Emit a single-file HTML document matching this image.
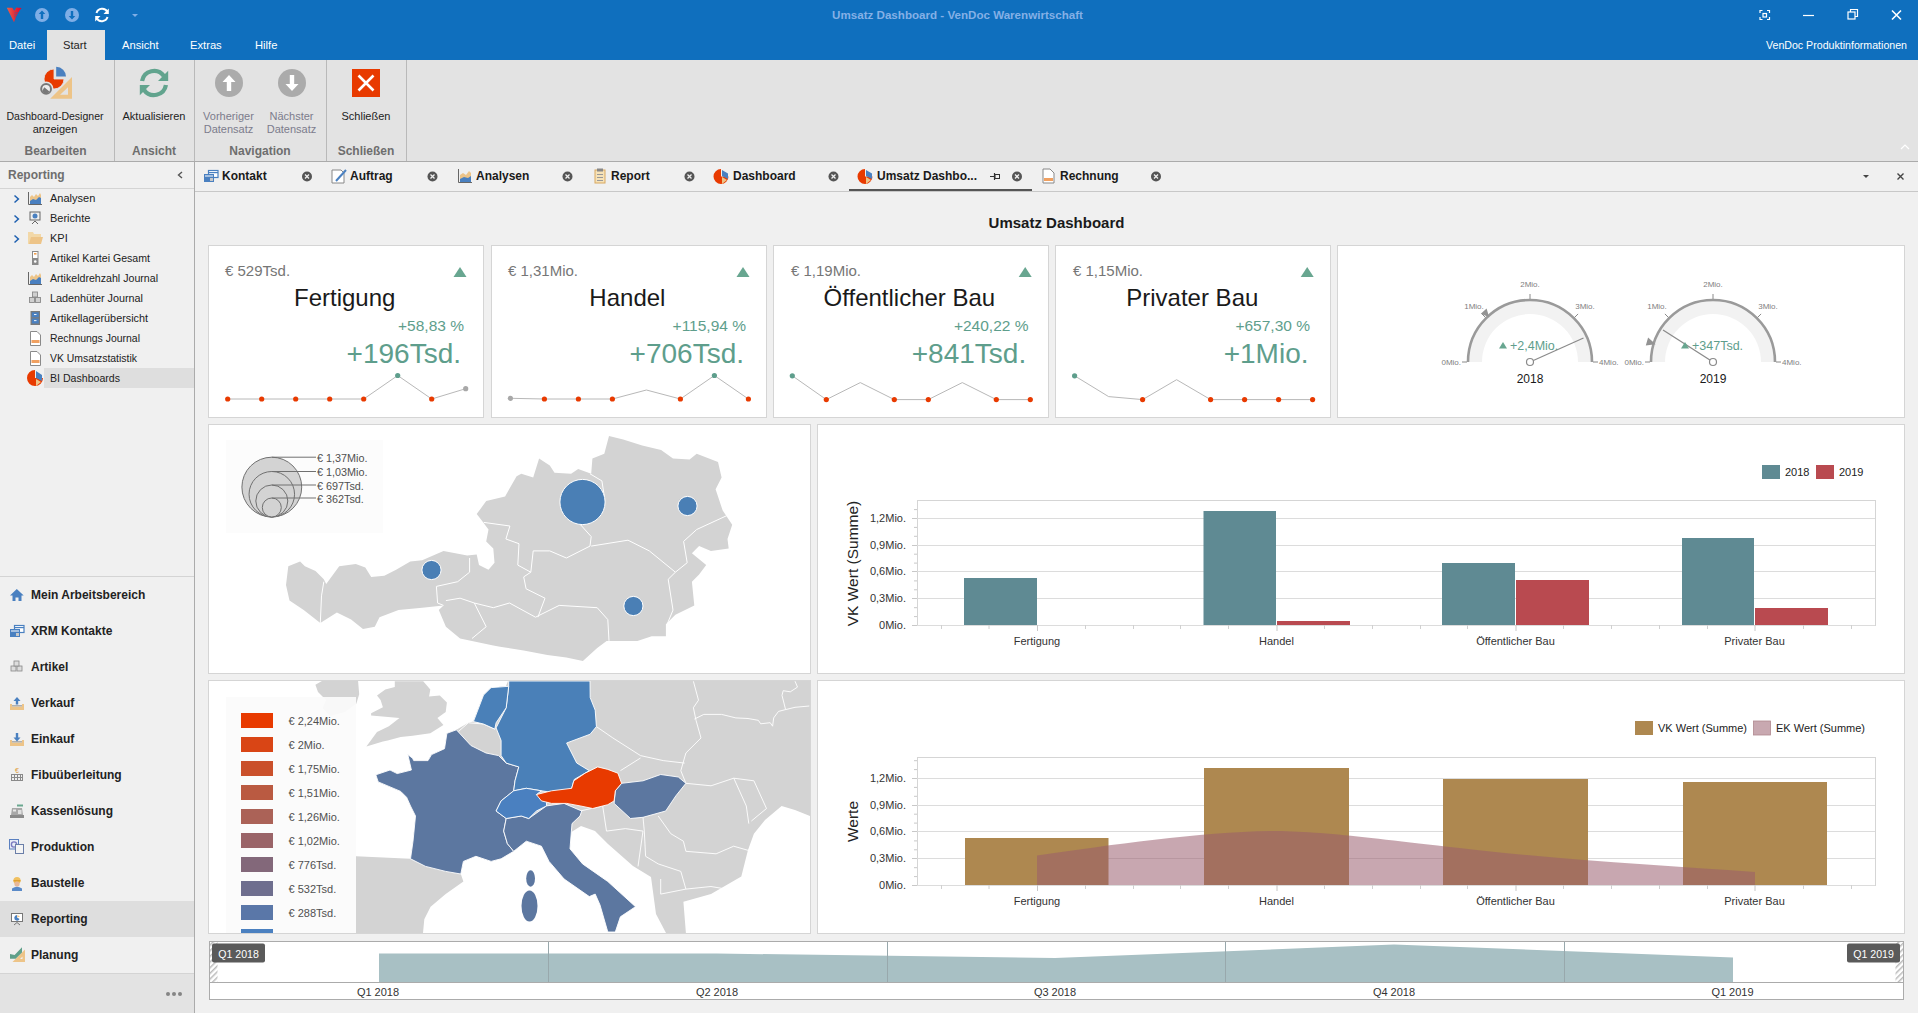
<!DOCTYPE html>
<html><head><meta charset="utf-8">
<style>
html,body{margin:0;padding:0;width:1918px;height:1013px;overflow:hidden;background:#F0F0F0}
svg{display:block}
text{font-family:"Liberation Sans",sans-serif}
</style></head><body>
<svg width="1918" height="1013" viewBox="0 0 1918 1013">
<!-- ============ TITLE + MENU ============ -->
<rect x="0" y="0" width="1918" height="60" fill="#0F6FBE"/>
<!-- V logo -->
<defs><linearGradient id="vg" x1="0" y1="0" x2="1" y2="0"><stop offset="0" stop-color="#F06048"/><stop offset="0.6" stop-color="#E02838"/><stop offset="1" stop-color="#E8002A"/></linearGradient></defs><path d="M6.8 7.7 L12.3 7.7 L14.2 10.8 L16.4 7.5 L21.6 7.9 L19.5 10.5 L16 17 L14 22.3 Z" fill="url(#vg)"/><g stroke="#0F6FBE" stroke-width="0.6" opacity="0.7"><path d="M14.5 12.8 H19 M14 14.8 H18 M14 16.8 H17"/></g>
<!-- quick access -->
<circle cx="42" cy="15" r="7" fill="#7FAEE6"/>
<path d="M42 10.5 L45.3 14 L43.2 14 L43.2 19 L40.8 19 L40.8 14 L38.7 14 Z" fill="#0F6FBE"/>
<circle cx="72" cy="15" r="7" fill="#7FAEE6"/>
<path d="M72 19.5 L75.3 16 L73.2 16 L73.2 11 L70.8 11 L70.8 16 L68.7 16 Z" fill="#0F6FBE"/>
<g fill="none" stroke="#FFFFFF" stroke-width="2">
<path d="M96.5 13 A6 6 0 0 1 107.5 12"/><path d="M107.5 17 A6 6 0 0 1 96.5 18"/>
</g>
<path d="M108.8 8.5 L108.8 14 L103.5 14 Z" fill="#fff"/><path d="M95.2 21.5 L95.2 16 L100.5 16 Z" fill="#fff"/>
<path d="M132 14 L138 14 L135 17 Z" fill="#7FAEE6"/>
<text x="957.5" y="19" font-size="11.6" font-weight="700" fill="#84B0E6" text-anchor="middle">Umsatz Dashboard - VenDoc Warenwirtschaft</text>
<!-- window buttons -->
<g fill="none" stroke="#fff" stroke-width="1.2">
<path d="M1760 13 V10.5 H1762.5 M1767 10.5 H1769.5 V13 M1769.5 17 V19.5 H1767 M1762.5 19.5 H1760 V17"/>
<rect x="1763" y="13.5" width="3.5" height="3.5"/>
<path d="M1803 15.5 H1814"/>
<rect x="1848" y="12" width="7" height="7"/><path d="M1850.5 12 V9.5 H1857.5 V16.5 H1855"/>
</g>
<path d="M1892 10.5 L1901 19.5 M1901 10.5 L1892 19.5" stroke="#fff" stroke-width="1.6"/>
<!-- menu -->
<rect x="47" y="30" width="58" height="31" fill="#E3E3E3"/>
<g font-size="11.2" fill="#FFFFFF">
<text x="9" y="49">Datei</text>
<text x="122" y="49">Ansicht</text>
<text x="190" y="49">Extras</text>
<text x="255" y="49">Hilfe</text>
<text x="1907" y="49" text-anchor="end" font-size="11" textLength="141" lengthAdjust="spacingAndGlyphs">VenDoc Produktinformationen</text>
</g>
<text x="63" y="49" font-size="11.2" fill="#222">Start</text>

<!-- ============ RIBBON ============ -->
<rect x="0" y="60" width="1918" height="101" fill="#E3E3E3"/>
<rect x="0" y="161" width="1918" height="1" fill="#ABABAB"/>
<g fill="#B9B9B9">
<rect x="114" y="60" width="1" height="101"/>
<rect x="194" y="60" width="1" height="101"/>
<rect x="326" y="60" width="1" height="101"/>
<rect x="406" y="60" width="1" height="101"/>
</g>
<!-- dashboard designer icon -->
<g>
<path d="M54 69 A10 10 0 1 0 64 79 L54 79 Z" fill="#E83A00" stroke="#E3E3E3" stroke-width="0.8"/>
<path d="M56.2 66.8 A9.8 9.8 0 0 1 66 76.6 L56.2 76.6 Z" fill="#4A80C0"/>
<path d="M72 77 L72 98.8 L50.2 98.8 Z" fill="#EDC488"/>
<path d="M68 87.3 L68 94.8 L60.1 94.8 Z" fill="#E3E3E3"/>
<circle cx="46.1" cy="88.9" r="7.4" fill="#E3E3E3"/>
<circle cx="46.1" cy="88.9" r="4.9" fill="#EDEDED" stroke="#787878" stroke-width="2"/>
<path d="M44.3 87.2 L48.5 90.8 L49.5 91.6 A4.2 4.2 0 0 1 42.2 91 Z" fill="#787878"/>
</g>
<!-- refresh icon green -->
<g fill="none" stroke="#62A48E" stroke-width="4.3">
<path d="M142.07 81 A12.1 12.1 0 0 1 163.9 76.1"/>
<path d="M165.93 85 A12.1 12.1 0 0 1 144.1 89.9"/>
</g>
<path d="M168.2 70.8 L168.2 81 L158 81 Z" fill="#62A48E"/><path d="M139.8 95.2 L139.8 85 L150 85 Z" fill="#62A48E"/>
<!-- nav icons -->
<circle cx="229" cy="83" r="14" fill="#ABABAB"/>
<path d="M229 75 L235.5 82 L231.2 82 L231.2 91 L226.8 91 L226.8 82 L222.5 82 Z" fill="#fff"/>
<circle cx="292" cy="83" r="14" fill="#ABABAB"/>
<path d="M292 91 L298.5 84 L294.2 84 L294.2 75 L289.8 75 L289.8 84 L285.5 84 Z" fill="#fff"/>
<rect x="352" y="69" width="28" height="28" fill="#E83A00"/>
<path d="M358.5 75.5 L373.5 90.5 M373.5 75.5 L358.5 90.5" stroke="#fff" stroke-width="2.6"/>
<g font-size="11" fill="#222" text-anchor="middle">
<text x="55" y="120" textLength="97" lengthAdjust="spacingAndGlyphs">Dashboard-Designer</text>
<text x="55" y="133">anzeigen</text>
<text x="154" y="120">Aktualisieren</text>
<text x="366" y="120">Schließen</text>
</g>
<g font-size="11" fill="#7C7C8C" text-anchor="middle">
<text x="228.5" y="120">Vorheriger</text>
<text x="228.5" y="133">Datensatz</text>
<text x="291.5" y="120">Nächster</text>
<text x="291.5" y="133">Datensatz</text>
</g>
<g font-size="12" font-weight="700" fill="#6E6E6E" text-anchor="middle">
<text x="55.5" y="155">Bearbeiten</text>
<text x="154" y="155">Ansicht</text>
<text x="260" y="155">Navigation</text>
<text x="366" y="155">Schließen</text>
</g>
<path d="M1901 149 L1905 145 L1909 149" fill="none" stroke="#fff" stroke-width="1.2"/>

<!-- ============ SIDEBAR ============ -->
<rect x="0" y="162" width="194" height="851" fill="#F0F0F0"/>
<rect x="194" y="161" width="1" height="852" fill="#ABABAB"/>
<text x="8" y="179" font-size="12" font-weight="700" fill="#6E6E6E">Reporting</text>
<path d="M182 172 L178.5 175 L182 178" fill="none" stroke="#555" stroke-width="1.4"/>
<rect x="0" y="188" width="194" height="1" fill="#D4D4D4"/>

<!-- tree -->
<g fill="#1F60B0">
<path d="M15 195 L19.5 199 L15 203 L14 202 L17.3 199 L14 196 Z"/>
<path d="M15 215 L19.5 219 L15 223 L14 222 L17.3 219 L14 216 Z"/>
<path d="M15 235 L19.5 239 L15 243 L14 242 L17.3 239 L14 236 Z"/>
</g>
<!-- icons -->
<g>
 <path d="M28.5 192 V204.5 H42" fill="none" stroke="#666" stroke-width="1"/>
 <path d="M30 204 V197 L32 195 L34 197 L36 194 L38 196 L40 193 L41 195 V204 Z" fill="#EDC488"/>
 <path d="M30 204 V201 L33 199 L36 200 L39 197 L41 198 V204 Z" fill="#4A80C0"/>
 <rect x="30" y="212" width="10" height="8" fill="none" stroke="#666"/>
 <circle cx="35" cy="216" r="2.5" fill="#4A80C0"/><path d="M32 224 L35 221 L38 224" fill="none" stroke="#666"/>
 <path d="M28 232 H33 L34 234 H41 V244 H28 Z" fill="#F2D8A8"/><path d="M29 244 L31 237 H43 L41 244 Z" fill="#EDC488"/>
 <rect x="32" y="251" width="6.5" height="14" fill="#8A8A8A"/><rect x="33" y="252" width="4.5" height="6" fill="#fff"/><rect x="34" y="253" width="2.5" height="1.6" fill="#F0A050"/><circle cx="35.25" cy="261.5" r="1.3" fill="#fff"/>
 <path d="M28.5 272 V284.5 H42" fill="none" stroke="#666" stroke-width="1"/>
 <path d="M30 284 V277 L32 275 L34 277 L36 274 L38 276 L40 273 L41 275 V284 Z" fill="#EDC488"/>
 <path d="M30 284 V281 L33 279 L36 280 L39 277 L41 278 V284 Z" fill="#4A80C0"/>
 <g fill="#D0D0D0" stroke="#8A8A8A" stroke-width="0.9"><rect x="29.5" y="297.5" width="5" height="5"/><rect x="35.5" y="297.5" width="5" height="5"/><rect x="32.5" y="292" width="5" height="5"/></g>
 <rect x="30.5" y="311" width="9.5" height="14" fill="#7A7A7A"/><rect x="31.8" y="312.3" width="7" height="5" fill="#4A80C0"/><rect x="31.8" y="318.5" width="7" height="5" fill="#4A80C0"/><rect x="34" y="314" width="2.5" height="0.9" fill="#fff"/><rect x="34" y="320.2" width="2.5" height="0.9" fill="#fff"/>
 <path d="M30.5 331.5 H37 L40.5 335 V345.5 H30.5 Z" fill="#fff" stroke="#8A8A8A" stroke-linejoin="miter"/><rect x="31.5" y="340" width="8" height="3" fill="#F0A060"/>
 <path d="M30.5 351.5 H37 L40.5 355 V365.5 H30.5 Z" fill="#fff" stroke="#8A8A8A" stroke-linejoin="miter"/><rect x="31.5" y="360" width="8" height="3" fill="#F0A060"/>
 <path d="M35 370 A8 8 0 1 0 43 378 L35 378 Z" fill="#E83A00"/><path d="M36 371 L42 375 L42 381 L36 378 Z" fill="#4A80C0"/><path d="M36 379 L41 382 L36 386 Z" fill="#EDC488"/>
</g>
<rect x="44" y="368" width="150" height="20" fill="#DEDEDE"/>
<g font-size="11" fill="#222">
<text x="50" y="202">Analysen</text>
<text x="50" y="222">Berichte</text>
<text x="50" y="242">KPI</text>
<text x="50" y="262" textLength="100" lengthAdjust="spacingAndGlyphs">Artikel Kartei Gesamt</text>
<text x="50" y="282" textLength="108" lengthAdjust="spacingAndGlyphs">Artikeldrehzahl Journal</text>
<text x="50" y="302" textLength="93" lengthAdjust="spacingAndGlyphs">Ladenhüter Journal</text>
<text x="50" y="322" textLength="98" lengthAdjust="spacingAndGlyphs">Artikellagerübersicht</text>
<text x="50" y="342" textLength="90" lengthAdjust="spacingAndGlyphs">Rechnungs Journal</text>
<text x="50" y="362" textLength="87" lengthAdjust="spacingAndGlyphs">VK Umsatzstatistik</text>
<text x="50" y="382" textLength="70" lengthAdjust="spacingAndGlyphs">BI Dashboards</text>
</g>
<!-- bottom nav -->
<rect x="0" y="576" width="194" height="1" fill="#D4D4D4"/>
<rect x="0" y="901" width="194" height="36" fill="#DEDEDE"/>
<rect x="0" y="973" width="194" height="1" fill="#D4D4D4"/>
<rect x="0" y="974" width="194" height="39" fill="#E3E3E3"/>
<g fill="#858585"><circle cx="168" cy="994" r="2"/><circle cx="174" cy="994" r="2"/><circle cx="180" cy="994" r="2"/></g>
<g font-size="12" font-weight="700" fill="#222">
<text x="31" y="599">Mein Arbeitsbereich</text>
<text x="31" y="635">XRM Kontakte</text>
<text x="31" y="671">Artikel</text>
<text x="31" y="707">Verkauf</text>
<text x="31" y="743">Einkauf</text>
<text x="31" y="779">Fibuüberleitung</text>
<text x="31" y="815">Kassenlösung</text>
<text x="31" y="851">Produktion</text>
<text x="31" y="887">Baustelle</text>
<text x="31" y="923">Reporting</text>
<text x="31" y="959">Planung</text>
</g>
<g>
 <path d="M16.8 589 L23.7 595.5 H21.5 V601 H18.5 V597.5 H15.5 V601 H12.5 V595.5 H10 Z" fill="#4A80C0"/>
 <rect x="14.5" y="625.5" width="9.5" height="7" fill="#fff" stroke="#4A80C0" stroke-width="1.2"/><rect x="14.5" y="627" width="9.5" height="1.2" fill="#4A80C0"/><rect x="10" y="629" width="10" height="8" fill="#4A80C0"/><rect x="11" y="630.5" width="8" height="1" fill="#fff"/><rect x="16" y="633" width="3" height="3" fill="#C8C8C8"/>
 <g fill="#DDD" stroke="#888" stroke-width="0.8"><rect x="11" y="666" width="5" height="5"/><rect x="17" y="666" width="5" height="5"/><rect x="14" y="661" width="5" height="5"/></g>
 <path d="M10 704 V710 H24 V704 H22 V706.5 H12 V704 Z" fill="#EDC488"/><rect x="12" y="705" width="10" height="1.5" fill="#B0B0B0"/><path d="M17 697 L20.5 701 H18.2 V704.5 H15.8 V701 H13.5 Z" fill="#4A80C0"/>
 <path d="M10 740 V746 H24 V740 H22 V742.5 H12 V740 Z" fill="#EDC488"/><rect x="12" y="741" width="10" height="1.5" fill="#B0B0B0"/><path d="M17 741.5 L20.5 737.5 H18.2 V733 H15.8 V737.5 H13.5 Z" fill="#4A80C0"/>
 <g fill="none" stroke="#8A8A8A" stroke-width="1"><rect x="11.5" y="774.5" width="11" height="6"/><path d="M14.5 774.5 V780.5 M17.5 774.5 V780.5 M20.5 774.5 V780.5 M11.5 777.5 H22.5"/></g><text x="17" y="773" font-size="7" fill="#E0A040" text-anchor="middle">€</text>
 <rect x="10" y="815" width="14" height="3" fill="#8A8A8A"/><path d="M11 815 L12 808 H22 L23 815 Z" fill="#A8A8A8"/><rect x="13" y="809.5" width="3" height="2" fill="#E8E8E8"/><rect x="18" y="810" width="3.5" height="4" fill="#E0E0E0"/><rect x="17" y="804.5" width="6" height="2" fill="#6AA890"/>
 <rect x="9.5" y="839.5" width="9" height="9.5" fill="#E8ECF6" stroke="#5A80C0"/><circle cx="14" cy="844.5" r="2.6" fill="none" stroke="#7A7AC0" stroke-width="1.4"/><rect x="15.5" y="844.5" width="8" height="9" fill="#F4F4F4" stroke="#6A7EA8"/>
 <circle cx="17" cy="880.5" r="3.6" fill="#F0C060"/><rect x="13.5" y="880" width="7" height="1.5" fill="#E0A030"/><circle cx="17" cy="884" r="2.6" fill="#E8B898"/><path d="M12 891 V888.5 Q17 885 22 888.5 V891 Z" fill="#5A8AC8"/>
 <rect x="11.5" y="913.5" width="11" height="8" fill="#fff" stroke="#777"/><path d="M17 915 A2.8 2.8 0 1 0 19.6 919 L17 917.5 Z" fill="#4A80C0"/><path d="M17.3 915 L20 916.5 L17.3 917.6 Z" fill="#EDC488"/><path d="M14 925 L17 922.5 L20 925" fill="none" stroke="#777"/>
 <path d="M12.5 962 L25 962 L25 949.5 Z" fill="#EDC488"/><path d="M20 959 L22.5 959 L22.5 956.5 Z" fill="#F0F0F0"/><path d="M10 954 L14.6 955 L22 947.2 L22 952.4 L15.6 958.8 L10 958.8 Z" fill="#5FA08A"/>
</g>
<!-- ============ TAB BAR ============ -->
<rect x="195" y="162" width="1723" height="29" fill="#F0F0F0"/>
<rect x="195" y="191" width="1723" height="1" fill="#C8C8C8"/>
<rect x="849" y="189" width="183" height="2" fill="#555"/>
<g font-size="12" font-weight="700" fill="#1A1A1A">
<text x="222" y="180">Kontakt</text>
<text x="350" y="180">Auftrag</text>
<text x="476" y="180">Analysen</text>
<text x="611" y="180">Report</text>
<text x="733" y="180">Dashboard</text>
<text x="877" y="180">Umsatz Dashbo...</text>
<text x="1060" y="180">Rechnung</text>
</g>
<g fill="#555">
<circle cx="307" cy="176.5" r="5"/><circle cx="432.5" cy="176.5" r="5"/><circle cx="567.5" cy="176.5" r="5"/>
<circle cx="689.5" cy="176.5" r="5"/><circle cx="833.5" cy="176.5" r="5"/><circle cx="1017" cy="176.5" r="5"/><circle cx="1156" cy="176.5" r="5"/>
</g>
<g stroke="#F0F0F0" stroke-width="1.3">
<path d="M305 174.5 L309 178.5 M309 174.5 L305 178.5"/><path d="M430.5 174.5 L434.5 178.5 M434.5 174.5 L430.5 178.5"/>
<path d="M565.5 174.5 L569.5 178.5 M569.5 174.5 L565.5 178.5"/><path d="M687.5 174.5 L691.5 178.5 M691.5 174.5 L687.5 178.5"/>
<path d="M831.5 174.5 L835.5 178.5 M835.5 174.5 L831.5 178.5"/><path d="M1015 174.5 L1019 178.5 M1019 174.5 L1015 178.5"/>
<path d="M1154 174.5 L1158 178.5 M1158 174.5 L1154 178.5"/>
</g>
<path d="M990 176.5 H994 M994.5 173 V180" stroke="#333" stroke-width="1.2" fill="none"/><rect x="995" y="174.5" width="4.5" height="4" fill="none" stroke="#333" stroke-width="1"/>
<path d="M1863 175 H1869 L1866 178 Z" fill="#444"/>
<path d="M1897.5 173.5 L1903.5 179.5 M1903.5 173.5 L1897.5 179.5" stroke="#444" stroke-width="1.4"/>
<g>
 <rect x="208.5" y="170.5" width="9.5" height="7" fill="#fff" stroke="#4A80C0" stroke-width="1.2"/><rect x="208.5" y="172" width="9.5" height="1.2" fill="#4A80C0"/><rect x="204" y="174" width="10" height="8" fill="#4A80C0"/><rect x="205" y="175.5" width="8" height="1" fill="#fff"/><rect x="210" y="178" width="3" height="3" fill="#C8C8C8"/>
 <path d="M332 170 H341 L344 173 V183 H332 Z" fill="#fff" stroke="#888"/><path d="M336 181 L346 170" stroke="#4A80C0" stroke-width="2"/>
 <path d="M458.5 169 V182.5 H472" fill="none" stroke="#666"/><path d="M460 182 V175 L463 173 L466 175 L469 171 L471 173 V182 Z" fill="#EDC488"/><path d="M460 182 V179 L464 177 L468 178 L471 176 V182 Z" fill="#4A80C0"/>
 <rect x="595" y="170" width="10" height="13" fill="#F6E2B8" stroke="#D8A860"/><rect x="597" y="168.5" width="6" height="3" fill="#888"/><g fill="#999"><rect x="597" y="174" width="6" height="1"/><rect x="597" y="177" width="6" height="1"/><rect x="597" y="180" width="6" height="1"/></g>
 <path d="M721 169 A7.5 7.5 0 1 0 728.5 176.5 L721 176.5 Z" fill="#E83A00"/><path d="M722 170 L728 173.5 L728 179 L722 176 Z" fill="#4A80C0"/><path d="M722 177 L727 180 L722 184 Z" fill="#EDC488"/>
 <path d="M865 169 A7.5 7.5 0 1 0 872.5 176.5 L865 176.5 Z" fill="#E83A00"/><path d="M866 170 L872 173.5 L872 179 L866 176 Z" fill="#4A80C0"/><path d="M866 177 L871 180 L866 184 Z" fill="#EDC488"/>
 <path d="M1043 169 H1050 L1054 173 V183 H1043 Z" fill="#fff" stroke="#888"/><rect x="1044" y="178" width="9" height="3" fill="#F0A060"/>
</g>
<!-- ============ DASHBOARD ============ -->
<text x="1056.5" y="228" font-size="15" font-weight="700" fill="#1A1A1A" text-anchor="middle">Umsatz Dashboard</text>
<!-- DASH START -->
<rect x="208.5" y="245.5" width="275" height="172" fill="#FFFFFF" stroke="#D5D5D5" stroke-width="1"/>
<rect x="491.5" y="245.5" width="275" height="172" fill="#FFFFFF" stroke="#D5D5D5" stroke-width="1"/>
<rect x="773.5" y="245.5" width="275" height="172" fill="#FFFFFF" stroke="#D5D5D5" stroke-width="1"/>
<rect x="1055.5" y="245.5" width="275" height="172" fill="#FFFFFF" stroke="#D5D5D5" stroke-width="1"/>
<rect x="1337.5" y="245.5" width="567" height="172" fill="#FFFFFF" stroke="#D5D5D5" stroke-width="1"/>
<rect x="208.5" y="424.5" width="602" height="249" fill="#FFFFFF" stroke="#D5D5D5" stroke-width="1"/>
<rect x="817.5" y="424.5" width="1087" height="249" fill="#FFFFFF" stroke="#D5D5D5" stroke-width="1"/>
<rect x="208.5" y="680.5" width="602" height="253" fill="#FFFFFF" stroke="#D5D5D5" stroke-width="1"/>
<rect x="817.5" y="680.5" width="1087" height="253" fill="#FFFFFF" stroke="#D5D5D5" stroke-width="1"/>
<text x="225" y="276" font-size="15" fill="#767676">€ 529Tsd.</text>
<path d="M453.5 277 L466.5 277 L460 267 Z" fill="#68A690"/>
<text x="344.7" y="306" font-size="24" fill="#1A1A1A" text-anchor="middle">Fertigung</text>
<text x="464" y="331" font-size="15.5" fill="#5E9E8C" text-anchor="end">+58,83 %</text>
<text x="461" y="363" font-size="28" fill="#5E9E8C" text-anchor="end">+196Tsd.</text>
<polyline points="227.7,399 261.7,399 295.7,399 329.7,399 363.7,399 397.7,375.5 431.7,399 465.7,388.7" fill="none" stroke="#B8B8B8" stroke-width="1"/>
<circle cx="227.7" cy="399" r="2.6" fill="#E83A00"/>
<circle cx="261.7" cy="399" r="2.6" fill="#E83A00"/>
<circle cx="295.7" cy="399" r="2.6" fill="#E83A00"/>
<circle cx="329.7" cy="399" r="2.6" fill="#E83A00"/>
<circle cx="363.7" cy="399" r="2.6" fill="#E83A00"/>
<circle cx="397.7" cy="375.5" r="2.6" fill="#5E9E8C"/>
<circle cx="431.7" cy="399" r="2.6" fill="#E83A00"/>
<circle cx="465.7" cy="388.7" r="2.6" fill="#A8A8A8"/>
<text x="508" y="276" font-size="15" fill="#767676">€ 1,31Mio.</text>
<path d="M736.5 277 L749.5 277 L743 267 Z" fill="#68A690"/>
<text x="627.4" y="306" font-size="24" fill="#1A1A1A" text-anchor="middle">Handel</text>
<text x="746" y="331" font-size="15.5" fill="#5E9E8C" text-anchor="end">+115,94 %</text>
<text x="744" y="363" font-size="28" fill="#5E9E8C" text-anchor="end">+706Tsd.</text>
<polyline points="510.4,398.3 544.4,399 578.4,399 612.4,399 646.4,390 680.4,399 714.4,375.5 748.4,399" fill="none" stroke="#B8B8B8" stroke-width="1"/>
<circle cx="510.4" cy="398.3" r="2.6" fill="#A8A8A8"/>
<circle cx="544.4" cy="399" r="2.6" fill="#E83A00"/>
<circle cx="578.4" cy="399" r="2.6" fill="#E83A00"/>
<circle cx="612.4" cy="399" r="2.6" fill="#E83A00"/>
<circle cx="680.4" cy="399" r="2.6" fill="#E83A00"/>
<circle cx="714.4" cy="375.5" r="2.6" fill="#5E9E8C"/>
<circle cx="748.4" cy="399" r="2.6" fill="#E83A00"/>
<text x="791" y="276" font-size="15" fill="#767676">€ 1,19Mio.</text>
<path d="M1018.7 277 L1031.7 277 L1025.2 267 Z" fill="#68A690"/>
<text x="909.4" y="306" font-size="24" fill="#1A1A1A" text-anchor="middle">Öffentlicher Bau</text>
<text x="1028.5" y="331" font-size="15.5" fill="#5E9E8C" text-anchor="end">+240,22 %</text>
<text x="1026.2" y="363" font-size="28" fill="#5E9E8C" text-anchor="end">+841Tsd.</text>
<polyline points="792.3,375.8 826.3,399.6 860.3,382.6 894.3,399.6 928.3,399.6 962.3,382.6 996.3,399.6 1030.3,399.6" fill="none" stroke="#B8B8B8" stroke-width="1"/>
<circle cx="792.3" cy="375.8" r="2.6" fill="#5E9E8C"/>
<circle cx="826.3" cy="399.6" r="2.6" fill="#E83A00"/>
<circle cx="894.3" cy="399.6" r="2.6" fill="#E83A00"/>
<circle cx="928.3" cy="399.6" r="2.6" fill="#E83A00"/>
<circle cx="996.3" cy="399.6" r="2.6" fill="#E83A00"/>
<circle cx="1030.3" cy="399.6" r="2.6" fill="#E83A00"/>
<text x="1073" y="276" font-size="15" fill="#767676">€ 1,15Mio.</text>
<path d="M1300.7 277 L1313.7 277 L1307.2 267 Z" fill="#68A690"/>
<text x="1192.3" y="306" font-size="24" fill="#1A1A1A" text-anchor="middle">Privater Bau</text>
<text x="1310" y="331" font-size="15.5" fill="#5E9E8C" text-anchor="end">+657,30 %</text>
<text x="1308.5" y="363" font-size="28" fill="#5E9E8C" text-anchor="end">+1Mio.</text>
<polyline points="1074.6,375.8 1108.6,396.6 1142.6,399.6 1176.6,379.7 1210.6,399.6 1244.6,399.6 1278.6,399.6 1312.6,399.6" fill="none" stroke="#B8B8B8" stroke-width="1"/>
<circle cx="1074.6" cy="375.8" r="2.6" fill="#5E9E8C"/>
<circle cx="1142.6" cy="399.6" r="2.6" fill="#E83A00"/>
<circle cx="1210.6" cy="399.6" r="2.6" fill="#E83A00"/>
<circle cx="1244.6" cy="399.6" r="2.6" fill="#E83A00"/>
<circle cx="1278.6" cy="399.6" r="2.6" fill="#E83A00"/>
<circle cx="1312.6" cy="399.6" r="2.6" fill="#E83A00"/>
<path d="M1468 362 A62 62 0 0 1 1592 362 L1578 362 A48 48 0 0 0 1482 362 Z" fill="#F2F2F2"/>
<path d="M1468 362 A62 62 0 0 1 1592 362" fill="none" stroke="#9A9A9A" stroke-width="2.6"/>
<line x1="1467.0" y1="362.0" x2="1462.0" y2="362.0" stroke="#8A8A8A" stroke-width="1"/>
<line x1="1485.5" y1="317.5" x2="1481.9" y2="313.9" stroke="#8A8A8A" stroke-width="1"/>
<line x1="1530.0" y1="299.0" x2="1530.0" y2="294.0" stroke="#8A8A8A" stroke-width="1"/>
<line x1="1574.5" y1="317.5" x2="1578.1" y2="313.9" stroke="#8A8A8A" stroke-width="1"/>
<line x1="1593.0" y1="362.0" x2="1598.0" y2="362.0" stroke="#8A8A8A" stroke-width="1"/>
<g font-size="8" fill="#808080">
<text x="1461" y="365" text-anchor="end">0Mio.</text>
<text x="1599" y="365">4Mio.</text>
<text x="1474" y="309" text-anchor="middle">1Mio.</text>
<text x="1530" y="287" text-anchor="middle">2Mio.</text>
<text x="1585" y="309" text-anchor="middle">3Mio.</text>
</g>
<path d="M1486.6 308.5 L1480.8 313.8 L1489.2 317.2 Z" fill="#939393"/>
<line x1="1530" y1="362" x2="1583.5" y2="338" stroke="#8A8A8A" stroke-width="1.2"/>
<circle cx="1530" cy="362" r="3.5" fill="#fff" stroke="#8A8A8A" stroke-width="1.2"/>
<path d="M1499 348.5 L1507 348.5 L1503 342 Z" fill="#68A690"/>
<text x="1510" y="349.5" font-size="12.5" fill="#5E9E8C">+2,4Mio.</text>
<text x="1530" y="383" font-size="12" fill="#1A1A1A" text-anchor="middle">2018</text>
<path d="M1651 362 A62 62 0 0 1 1775 362 L1761 362 A48 48 0 0 0 1665 362 Z" fill="#F2F2F2"/>
<path d="M1651 362 A62 62 0 0 1 1775 362" fill="none" stroke="#9A9A9A" stroke-width="2.6"/>
<line x1="1650.0" y1="362.0" x2="1645.0" y2="362.0" stroke="#8A8A8A" stroke-width="1"/>
<line x1="1668.5" y1="317.5" x2="1664.9" y2="313.9" stroke="#8A8A8A" stroke-width="1"/>
<line x1="1713.0" y1="299.0" x2="1713.0" y2="294.0" stroke="#8A8A8A" stroke-width="1"/>
<line x1="1757.5" y1="317.5" x2="1761.1" y2="313.9" stroke="#8A8A8A" stroke-width="1"/>
<line x1="1776.0" y1="362.0" x2="1781.0" y2="362.0" stroke="#8A8A8A" stroke-width="1"/>
<g font-size="8" fill="#808080">
<text x="1644" y="365" text-anchor="end">0Mio.</text>
<text x="1782" y="365">4Mio.</text>
<text x="1657" y="309" text-anchor="middle">1Mio.</text>
<text x="1713" y="287" text-anchor="middle">2Mio.</text>
<text x="1768" y="309" text-anchor="middle">3Mio.</text>
</g>
<path d="M1648.1 337.6 L1645.8 345.6 L1655.6 344.3 Z" fill="#939393"/>
<line x1="1713" y1="362" x2="1663" y2="330" stroke="#8A8A8A" stroke-width="1.2"/>
<circle cx="1713" cy="362" r="3.5" fill="#fff" stroke="#8A8A8A" stroke-width="1.2"/>
<path d="M1681 348.5 L1689 348.5 L1685 342 Z" fill="#68A690"/>
<text x="1692" y="349.5" font-size="12.5" fill="#5E9E8C">+347Tsd.</text>
<text x="1713" y="383" font-size="12" fill="#1A1A1A" text-anchor="middle">2019</text>
<rect x="917.5" y="500.5" width="958" height="125" fill="#fff" stroke="#D5D5D5"/>
<line x1="917" y1="518.5" x2="1875" y2="518.5" stroke="#DCDCDC"/>
<line x1="917" y1="545.5" x2="1875" y2="545.5" stroke="#DCDCDC"/>
<line x1="917" y1="571.5" x2="1875" y2="571.5" stroke="#DCDCDC"/>
<line x1="917" y1="598.5" x2="1875" y2="598.5" stroke="#DCDCDC"/>
<line x1="917" y1="625.5" x2="1875" y2="625.5" stroke="#DCDCDC"/>
<text x="906" y="522" font-size="11" fill="#333" text-anchor="end">1,2Mio.</text>
<line x1="912" y1="518.5" x2="917" y2="518.5" stroke="#C8C8C8"/>
<text x="906" y="549" font-size="11" fill="#333" text-anchor="end">0,9Mio.</text>
<line x1="912" y1="545.5" x2="917" y2="545.5" stroke="#C8C8C8"/>
<text x="906" y="575" font-size="11" fill="#333" text-anchor="end">0,6Mio.</text>
<line x1="912" y1="571.5" x2="917" y2="571.5" stroke="#C8C8C8"/>
<text x="906" y="602" font-size="11" fill="#333" text-anchor="end">0,3Mio.</text>
<line x1="912" y1="598.5" x2="917" y2="598.5" stroke="#C8C8C8"/>
<text x="906" y="629" font-size="11" fill="#333" text-anchor="end">0Mio.</text>
<line x1="912" y1="625.5" x2="917" y2="625.5" stroke="#C8C8C8"/>
<line x1="914" y1="616.6" x2="917" y2="616.6" stroke="#C8C8C8"/>
<line x1="914" y1="607.7" x2="917" y2="607.7" stroke="#C8C8C8"/>
<line x1="914" y1="589.8" x2="917" y2="589.8" stroke="#C8C8C8"/>
<line x1="914" y1="580.9" x2="917" y2="580.9" stroke="#C8C8C8"/>
<line x1="914" y1="563.1" x2="917" y2="563.1" stroke="#C8C8C8"/>
<line x1="914" y1="554.2" x2="917" y2="554.2" stroke="#C8C8C8"/>
<line x1="914" y1="536.3" x2="917" y2="536.3" stroke="#C8C8C8"/>
<line x1="914" y1="527.4" x2="917" y2="527.4" stroke="#C8C8C8"/>
<line x1="914" y1="509.6" x2="917" y2="509.6" stroke="#C8C8C8"/>
<line x1="1037.5" y1="625" x2="1037.5" y2="631" stroke="#C8C8C8"/>
<line x1="1277.0" y1="625" x2="1277.0" y2="631" stroke="#C8C8C8"/>
<line x1="1516.0" y1="625" x2="1516.0" y2="631" stroke="#C8C8C8"/>
<line x1="1755.0" y1="625" x2="1755.0" y2="631" stroke="#C8C8C8"/>
<line x1="941.5" y1="625" x2="941.5" y2="629" stroke="#D0D0D0"/>
<line x1="989.0" y1="625" x2="989.0" y2="629" stroke="#D0D0D0"/>
<line x1="1085.5" y1="625" x2="1085.5" y2="629" stroke="#D0D0D0"/>
<line x1="1133.5" y1="625" x2="1133.5" y2="629" stroke="#D0D0D0"/>
<line x1="1180.5" y1="625" x2="1180.5" y2="629" stroke="#D0D0D0"/>
<line x1="1228.5" y1="625" x2="1228.5" y2="629" stroke="#D0D0D0"/>
<line x1="1324.5" y1="625" x2="1324.5" y2="629" stroke="#D0D0D0"/>
<line x1="1372.5" y1="625" x2="1372.5" y2="629" stroke="#D0D0D0"/>
<line x1="1420.5" y1="625" x2="1420.5" y2="629" stroke="#D0D0D0"/>
<line x1="1467.5" y1="625" x2="1467.5" y2="629" stroke="#D0D0D0"/>
<line x1="1563.5" y1="625" x2="1563.5" y2="629" stroke="#D0D0D0"/>
<line x1="1611.5" y1="625" x2="1611.5" y2="629" stroke="#D0D0D0"/>
<line x1="1659.5" y1="625" x2="1659.5" y2="629" stroke="#D0D0D0"/>
<line x1="1707.5" y1="625" x2="1707.5" y2="629" stroke="#D0D0D0"/>
<line x1="1803.5" y1="625" x2="1803.5" y2="629" stroke="#D0D0D0"/>
<line x1="1851.5" y1="625" x2="1851.5" y2="629" stroke="#D0D0D0"/>
<text x="1037" y="645" font-size="11" fill="#333" text-anchor="middle">Fertigung</text>
<text x="1276.5" y="645" font-size="11" fill="#333" text-anchor="middle">Handel</text>
<text x="1515.5" y="645" font-size="11" fill="#333" text-anchor="middle">Öffentlicher Bau</text>
<text x="1754.5" y="645" font-size="11" fill="#333" text-anchor="middle">Privater Bau</text>
<text transform="translate(858,563.5) rotate(-90)" font-size="15.5" fill="#222" text-anchor="middle">VK Wert (Summe)</text>
<rect x="964" y="578" width="73" height="47" fill="#5F8A93"/>
<rect x="1203.5" y="511" width="72.5" height="114" fill="#5F8A93"/>
<rect x="1277" y="621" width="73" height="4" fill="#B94A50"/>
<rect x="1442" y="563" width="73" height="62" fill="#5F8A93"/>
<rect x="1516" y="580" width="73" height="45" fill="#B94A50"/>
<rect x="1682" y="538" width="72" height="87" fill="#5F8A93"/>
<rect x="1755" y="608" width="73" height="17" fill="#B94A50"/>
<rect x="1762" y="465" width="18" height="14" fill="#5F8A93"/><text x="1785" y="476" font-size="11" fill="#222">2018</text>
<rect x="1816" y="465" width="18" height="14" fill="#B94A50"/><text x="1839" y="476" font-size="11" fill="#222">2019</text>
<rect x="917.5" y="757.5" width="958" height="128" fill="#fff" stroke="#D5D5D5"/>
<line x1="917" y1="778.5" x2="1875" y2="778.5" stroke="#DCDCDC"/>
<line x1="917" y1="805.5" x2="1875" y2="805.5" stroke="#DCDCDC"/>
<line x1="917" y1="831.5" x2="1875" y2="831.5" stroke="#DCDCDC"/>
<line x1="917" y1="858.5" x2="1875" y2="858.5" stroke="#DCDCDC"/>
<line x1="917" y1="885.5" x2="1875" y2="885.5" stroke="#DCDCDC"/>
<text x="906" y="782" font-size="11" fill="#333" text-anchor="end">1,2Mio.</text>
<line x1="912" y1="778.5" x2="917" y2="778.5" stroke="#C8C8C8"/>
<text x="906" y="809" font-size="11" fill="#333" text-anchor="end">0,9Mio.</text>
<line x1="912" y1="805.5" x2="917" y2="805.5" stroke="#C8C8C8"/>
<text x="906" y="835" font-size="11" fill="#333" text-anchor="end">0,6Mio.</text>
<line x1="912" y1="831.5" x2="917" y2="831.5" stroke="#C8C8C8"/>
<text x="906" y="862" font-size="11" fill="#333" text-anchor="end">0,3Mio.</text>
<line x1="912" y1="858.5" x2="917" y2="858.5" stroke="#C8C8C8"/>
<text x="906" y="889" font-size="11" fill="#333" text-anchor="end">0Mio.</text>
<line x1="912" y1="885.5" x2="917" y2="885.5" stroke="#C8C8C8"/>
<line x1="914" y1="876.6" x2="917" y2="876.6" stroke="#C8C8C8"/>
<line x1="914" y1="867.7" x2="917" y2="867.7" stroke="#C8C8C8"/>
<line x1="914" y1="849.8" x2="917" y2="849.8" stroke="#C8C8C8"/>
<line x1="914" y1="840.9" x2="917" y2="840.9" stroke="#C8C8C8"/>
<line x1="914" y1="823.1" x2="917" y2="823.1" stroke="#C8C8C8"/>
<line x1="914" y1="814.2" x2="917" y2="814.2" stroke="#C8C8C8"/>
<line x1="914" y1="796.3" x2="917" y2="796.3" stroke="#C8C8C8"/>
<line x1="914" y1="787.4" x2="917" y2="787.4" stroke="#C8C8C8"/>
<line x1="914" y1="769.6" x2="917" y2="769.6" stroke="#C8C8C8"/>
<line x1="914" y1="760.7" x2="917" y2="760.7" stroke="#C8C8C8"/>
<line x1="1037.5" y1="885" x2="1037.5" y2="891" stroke="#C8C8C8"/>
<line x1="1277.0" y1="885" x2="1277.0" y2="891" stroke="#C8C8C8"/>
<line x1="1516.0" y1="885" x2="1516.0" y2="891" stroke="#C8C8C8"/>
<line x1="1755.0" y1="885" x2="1755.0" y2="891" stroke="#C8C8C8"/>
<line x1="941.5" y1="885" x2="941.5" y2="889" stroke="#D0D0D0"/>
<line x1="989.0" y1="885" x2="989.0" y2="889" stroke="#D0D0D0"/>
<line x1="1085.5" y1="885" x2="1085.5" y2="889" stroke="#D0D0D0"/>
<line x1="1133.5" y1="885" x2="1133.5" y2="889" stroke="#D0D0D0"/>
<line x1="1180.5" y1="885" x2="1180.5" y2="889" stroke="#D0D0D0"/>
<line x1="1228.5" y1="885" x2="1228.5" y2="889" stroke="#D0D0D0"/>
<line x1="1324.5" y1="885" x2="1324.5" y2="889" stroke="#D0D0D0"/>
<line x1="1372.5" y1="885" x2="1372.5" y2="889" stroke="#D0D0D0"/>
<line x1="1420.5" y1="885" x2="1420.5" y2="889" stroke="#D0D0D0"/>
<line x1="1467.5" y1="885" x2="1467.5" y2="889" stroke="#D0D0D0"/>
<line x1="1563.5" y1="885" x2="1563.5" y2="889" stroke="#D0D0D0"/>
<line x1="1611.5" y1="885" x2="1611.5" y2="889" stroke="#D0D0D0"/>
<line x1="1659.5" y1="885" x2="1659.5" y2="889" stroke="#D0D0D0"/>
<line x1="1707.5" y1="885" x2="1707.5" y2="889" stroke="#D0D0D0"/>
<line x1="1803.5" y1="885" x2="1803.5" y2="889" stroke="#D0D0D0"/>
<line x1="1851.5" y1="885" x2="1851.5" y2="889" stroke="#D0D0D0"/>
<text x="1037" y="905" font-size="11" fill="#333" text-anchor="middle">Fertigung</text>
<text x="1276.5" y="905" font-size="11" fill="#333" text-anchor="middle">Handel</text>
<text x="1515.5" y="905" font-size="11" fill="#333" text-anchor="middle">Öffentlicher Bau</text>
<text x="1754.5" y="905" font-size="11" fill="#333" text-anchor="middle">Privater Bau</text>
<text transform="translate(858,821.5) rotate(-90)" font-size="15.5" fill="#222" text-anchor="middle">Werte</text>
<rect x="965" y="838" width="143.5" height="47" fill="#AE8850"/>
<rect x="1204" y="768" width="145" height="117" fill="#AE8850"/>
<rect x="1443" y="779" width="145" height="106" fill="#AE8850"/>
<rect x="1683" y="782" width="144" height="103" fill="#AE8850"/>
<path d="M1037 855.5 C1110 845, 1200 832, 1270 831 C1330 831, 1380 840, 1515 854 C1600 862, 1680 867, 1755 872 L1755 885 L1037 885 Z" fill="#995D6D" fill-opacity="0.54"/>
<rect x="1635" y="721" width="18" height="14" fill="#AE8850"/><text x="1658" y="732" font-size="11" fill="#222">VK Wert (Summe)</text>
<rect x="1753.5" y="721" width="17" height="14" fill="#C8A8B0" stroke="#B08890" stroke-width="0.8"/><text x="1776" y="732" font-size="11" fill="#222">EK Wert (Summe)</text>
<rect x="209.5" y="941.5" width="1694" height="58" fill="#fff" stroke="#ABABAB"/>
<path d="M379 953.5 L717 953.5 L1055 958 L1394 944.6 L1733 957.5 L1733 982 L379 982 Z" fill="#A8C0C4"/>
<line x1="548.5" y1="942" x2="548.5" y2="982" stroke="#98A8AC"/>
<line x1="887.5" y1="942" x2="887.5" y2="982" stroke="#98A8AC"/>
<line x1="1225.5" y1="942" x2="1225.5" y2="982" stroke="#98A8AC"/>
<line x1="1564.5" y1="942" x2="1564.5" y2="982" stroke="#98A8AC"/>
<line x1="210" y1="982.5" x2="1903" y2="982.5" stroke="#ABABAB"/>
<text x="378" y="995.5" font-size="11" fill="#333" text-anchor="middle">Q1 2018</text>
<text x="717" y="995.5" font-size="11" fill="#333" text-anchor="middle">Q2 2018</text>
<text x="1055" y="995.5" font-size="11" fill="#333" text-anchor="middle">Q3 2018</text>
<text x="1394" y="995.5" font-size="11" fill="#333" text-anchor="middle">Q4 2018</text>
<text x="1732.5" y="995.5" font-size="11" fill="#333" text-anchor="middle">Q1 2019</text>
<defs><pattern id="hatch" width="4" height="4" patternUnits="userSpaceOnUse" patternTransform="rotate(45)"><rect width="4" height="4" fill="#fff"/><rect width="1.5" height="4" fill="#BBB"/></pattern></defs>
<rect x="210" y="942" width="7.5" height="40" fill="url(#hatch)"/>
<rect x="1895.5" y="942" width="7.5" height="40" fill="url(#hatch)"/>
<rect x="212" y="943.5" width="53" height="19" rx="2" fill="#5A5A5A"/><text x="238.5" y="957.5" font-size="10.6" fill="#fff" text-anchor="middle">Q1 2018</text>
<rect x="1847" y="943.5" width="53" height="19" rx="2" fill="#5A5A5A"/><text x="1873.5" y="957.5" font-size="10.6" fill="#fff" text-anchor="middle">Q1 2019</text>
<!-- DASH END -->
<!-- MAPS START -->
<path d="M288.3,566.3 L300.1,561.5 L304.9,566.3 L315.5,571 L323.8,579.3 L326.2,584 L339.2,566.3 L355.8,563.9 L365.3,567.4 L371.2,576.9 L384.3,575.7 L396.1,569.8 L410.3,561.5 L422.2,560.3 L443.5,550.9 L455.4,553.2 L467.2,555.6 L476.7,554.4 L479,565 L488.5,569.8 L494.5,562.7 L493.3,548.5 L486.2,541.4 L488.5,529.5 L481.4,520 L476.7,514.1 L486.2,501.1 L505.1,496.4 L516.6,476.2 L521.3,473.8 L533.2,477.4 L539.1,458.4 L549.8,465.5 L554.5,472.7 L571.1,473.8 L578.2,469.1 L591.2,473.8 L592.4,458.4 L604.3,453.7 L609,435.9 L623.2,439.5 L642.2,445.4 L661.1,450.1 L673,458.4 L689.6,459.6 L696.7,453.7 L718,462 L721.6,477.4 L715.6,489.2 L722.7,510.6 L732.2,524.8 L727.5,539 L728.7,548.5 L710.9,550.9 L699.1,546.1 L691.9,553.2 L706.2,565.1 L699.1,574.5 L691.9,581.7 L694.3,605.4 L675.4,614.8 L665.9,624.3 L665.9,636.2 L651.7,636.2 L637.4,640.9 L606.6,640.9 L597.2,648 L582.9,661 L566.4,657.5 L547.4,655.1 L523.7,650.4 L500,646.8 L493.3,645.6 L460.1,638.5 L445.9,626.7 L438.8,610.1 L443.5,605.4 L422.2,607.7 L398.5,610.1 L379.5,617.2 L374.8,626.7 L363,629 L351.1,619.6 L336.9,612.5 L320.3,623.1 L303.7,610 L289.5,600.6 L286,585 Z" fill="#D3D3D3"/>
<path d="M323.8,581.7 L321.5,595.9 L320.3,623.1" fill="none" stroke="#fff" stroke-width="1"/>
<path d="M469.6,558 L469.6,572.2 L457.7,581.7 L436.4,586.4 L437.6,603 L443.5,605.4" fill="none" stroke="#fff" stroke-width="1"/>
<path d="M445.9,600.6 L460.1,598.2 L474.3,603 L486.2,626.7 L472,638.5" fill="none" stroke="#fff" stroke-width="1"/>
<path d="M474.3,603 L493.3,607.7 L509.5,603 L535.5,617.2 L559.2,605.4 L597.2,607.7 L607.8,619.6 L609,640.9" fill="none" stroke="#fff" stroke-width="1"/>
<path d="M483.8,522.4 L509.9,526 L505.9,539 L519,543.7 L517.8,565.1 L530.8,572.2 L523.7,576.9 L526.1,588.8 L545,598.2 L537.9,617.2" fill="none" stroke="#fff" stroke-width="1"/>
<path d="M530.8,572.2 L533.2,550.9 L549.8,550.9 L566.4,558 L590,546.1 L591.2,536.6 L580.6,524.8" fill="none" stroke="#fff" stroke-width="1"/>
<path d="M590,473.8 L601.9,480.9 L604.3,496.4 L594.8,517.7 L580.6,524.8" fill="none" stroke="#fff" stroke-width="1"/>
<path d="M591.2,546.1 L628,540.2 L649.3,550.9 L675.4,572.2" fill="none" stroke="#fff" stroke-width="1"/>
<path d="M675.4,572.2 L668.2,579.3 L673,610.1 L667.1,624.3" fill="none" stroke="#fff" stroke-width="1"/>
<path d="M675.4,572.2 L687.2,562.7 L683.6,541.4 L696.7,529.5 L727.5,515.3" fill="none" stroke="#fff" stroke-width="1"/>
<circle cx="582.5" cy="502" r="22.6" fill="#4A7FB5" stroke="#fff" stroke-width="1"/>
<circle cx="687.5" cy="506" r="9.6" fill="#4A7FB5" stroke="#fff" stroke-width="1"/>
<circle cx="431.5" cy="570" r="9.6" fill="#4A7FB5" stroke="#fff" stroke-width="1"/>
<circle cx="633.4" cy="606" r="9.6" fill="#4A7FB5" stroke="#fff" stroke-width="1"/>
<rect x="226" y="440" width="157" height="93" fill="#FCFCFC"/>
<circle cx="271.8" cy="487.1" r="29.9" fill="#D3D3D3" stroke="#707070" stroke-width="1"/>
<circle cx="271.8" cy="494.25" r="22.75" fill="#D3D3D3" stroke="#707070" stroke-width="1"/>
<circle cx="271.8" cy="501" r="16" fill="#D3D3D3" stroke="#707070" stroke-width="1"/>
<circle cx="271.8" cy="507.5" r="9.5" fill="#D3D3D3" stroke="#707070" stroke-width="1"/>
<line x1="271.8" y1="457.2" x2="316" y2="457.2" stroke="#707070" stroke-width="1"/>
<text x="317" y="461.7" font-size="10.8" fill="#505050">€ 1,37Mio.</text>
<line x1="271.8" y1="471.5" x2="316" y2="471.5" stroke="#707070" stroke-width="1"/>
<text x="317" y="476.0" font-size="10.8" fill="#505050">€ 1,03Mio.</text>
<line x1="271.8" y1="485.0" x2="316" y2="485.0" stroke="#707070" stroke-width="1"/>
<text x="317" y="489.5" font-size="10.8" fill="#505050">€ 697Tsd.</text>
<line x1="271.8" y1="498.0" x2="316" y2="498.0" stroke="#707070" stroke-width="1"/>
<text x="317" y="502.5" font-size="10.8" fill="#505050">€ 362Tsd.</text>
<defs><clipPath id="m2"><rect x="209" y="681" width="601" height="252"/></clipPath></defs>
<g clip-path="url(#m2)">
<rect x="209" y="681" width="601" height="252" fill="#fff"/>
<rect x="356" y="681" width="454" height="252" fill="#D3D3D3"/>
<path d="M356,681 L508,681 L506,686 L491,688 L483.5,695 L473,721.6 L468.4,722.8 L456.4,729.8 L446.9,733.3 L444.5,748.7 L431.5,754.6 L428,760.6 L413.7,760.6 L407.8,754.6 L411.4,770 L397.2,773.6 L390,770 L375.8,774.8 L378.2,781.9 L400.7,791.4 L406.6,797.3 L410.5,806 L415.5,816 L413,841.2 L410.5,858.8 L356,856.3 Z" fill="#fff"/>
<path d="M513.7,851.3 L526.3,841.2 L541.4,846.2 L565,836 L581,826 L595,831 L608,844 L633,866 L651,877 L656,914 L666,933 L423,933 L424.3,919.3 L430.6,906.7 L445.7,894.1 L463.4,881.5 L460.8,874 L463.4,861.4 L475.9,856.3 L491.1,861.4 L501.1,858.8 Z" fill="#fff"/>
<path d="M753.9,833.7 L765,820 L781.6,806 L795,810 L810,816 L810,933 L685.9,933 L683.4,901.7 L711,894.1 L741.3,876.5 L748,850 Z" fill="#fff"/>
<path d="M394.8,681.2 L423.2,681.2 L430.3,689.5 L429.1,696.6 L439.8,695.4 L446.9,702.5 L445.7,712 L437.4,717.9 L443.4,725 L430.3,733.3 L412.6,735.7 L400.7,736.9 L387.7,740.4 L382.9,741.6 L366.4,746.4 L377,732.1 L388.9,726.2 L399.5,717.9 L371.1,715.5 L371.1,713.2 L382.9,707.3 L380.6,700.1 L377,695.4 L385.3,689.5 L394.8,687.1 Z" fill="#D3D3D3"/>
<path d="M315.4,684.7 L323.7,680 L358,680 L359.2,694.2 L356.3,703.7 L345,712 L330,716 L322.5,708 L326,700 L318,692 Z" fill="#D3D3D3"/>
<path d="M596.4,726.6 L612.8,737.9 L640.5,755.6 L663.2,760.6 L684.6,763.1" fill="none" stroke="#fff" stroke-width="0.9"/>
<path d="M620.4,770.7 L640.5,758" fill="none" stroke="#fff" stroke-width="0.9"/>
<path d="M693.4,681.3 L698.5,700.2 L693.4,707.7 L696,720.3 L701,738 L685.9,753 L680.8,770.7 L685.9,783.3" fill="none" stroke="#fff" stroke-width="0.9"/>
<path d="M694.4,719.1 L703.8,714.4 L721.6,714.4 L735.8,717.9 L748,718.5 L758.3,720.3 L760.7,723.8 L770.2,722.7 L772.6,726.2 L773.7,717.9 L778.5,711.4 L785.6,709.6 L795,707.3 L809.3,706" fill="none" stroke="#fff" stroke-width="0.9"/>
<path d="M785.6,709.6 L782,695.4 L783.2,690.7 L790.3,691.8 L797.5,687.1 L795,681.2" fill="none" stroke="#fff" stroke-width="0.9"/>
<path d="M685.9,783.3 L711,785.8 L733.7,778.2 L753.9,780.8 L766.5,808.5 L751.4,821" fill="none" stroke="#fff" stroke-width="0.9"/>
<path d="M733.7,778 L746.3,806 L748.8,823.6" fill="none" stroke="#fff" stroke-width="0.9"/>
<path d="M658.2,816 L670.8,833.7 L683.4,841.2 L685.9,851.3 L716.1,853.8 L733.7,846.2 L751.4,851.3" fill="none" stroke="#fff" stroke-width="0.9"/>
<path d="M643,817.3 L644.3,831.1 L645.6,856.3 L658.2,863.9 L680.8,871.4 L685.9,889.1 L711,886.5 L726.2,889.1" fill="none" stroke="#fff" stroke-width="0.9"/>
<path d="M580,811 L602.7,806 L606.5,831.1 L625.4,828.6 L643,831.1 L638,866.4" fill="none" stroke="#fff" stroke-width="0.9"/>
<path d="M660.7,879 L660.7,894.1 L685.9,889.1" fill="none" stroke="#fff" stroke-width="0.9"/>
<path d="M458.3,731.6 L468.4,722.8 L483.5,724 L494.8,729.1" fill="none" stroke="#fff" stroke-width="0.9"/>
<path d="M375.8,774.8 L390,770 L397.2,773.6 L411.4,770 L407.8,754.6 L412.6,758.2 L413.7,760.6 L428,760.6 L431.5,754.6 L444.5,748.7 L446.9,733.3 L456.4,729.8 L470.9,745.5 L486,753 L498.6,755.6 L506.2,763.1 L518.8,766.9 L515,780.8 L513.7,790.8 L501.1,800.9 L496.1,811 L506.2,818.5 L503.7,831.1 L507.4,843.7 L513.7,851.3 L501.1,858.8 L491.1,861.4 L475.9,856.3 L463.4,861.4 L460.8,874 L445.7,871.4 L425.6,866.4 L410.5,858.8 L413,841.2 L415.5,816 L410.5,806 L406.6,797.3 L400.7,791.4 L378.2,781.9 Z" fill="#5C77A0" stroke="#fff" stroke-width="0.9" stroke-linejoin="round"/>
<path d="M506.2,818.5 L521.3,816 L528.8,818.5 L546.5,805.9 L564.1,803.4 L570,806 L581.7,811 L580,816 L572,823.6 L570,848.8 L582.6,863.9 L607.8,881.5 L635.5,906.7 L620.4,916.8 L615.3,932 L607.8,932 L600,905 L595.2,894.1 L589.3,896.6 L564.1,879 L549,861.4 L541.4,846.2 L526.3,841.2 L513.7,851.3 L507.4,843.7 L503.7,831.1 Z" fill="#5C77A0" stroke="#fff" stroke-width="0.9" stroke-linejoin="round"/>
<path d="M508.7,681 L590,681 L590.2,697.6 L595.2,710.2 L596.4,726.6 L590.2,734.2 L566.6,743 L576.7,763 L589.3,770.7 L574.2,779.5 L571.7,788.3 L559.1,793.4 L541.4,790.8 L526.3,788.3 L513.7,790.8 L515,780.8 L518.8,766.9 L506.2,763.1 L501.1,755.6 L501.1,740.5 L496.1,727.9 L506.2,707.7 L508.7,686.3 Z" fill="#4A80B8" stroke="#fff" stroke-width="0.9" stroke-linejoin="round"/>
<path d="M473.4,721.6 L483.5,695.1 L491.1,687.6 L508.7,686.3 L506.2,707.7 L496.1,722.8 L494.8,729.1 L483.5,724 Z" fill="#4A80B8" stroke="#fff" stroke-width="0.9" stroke-linejoin="round"/>
<path d="M513.7,790.8 L501.1,800.9 L496.1,811 L506.2,818.5 L521.3,816 L528.8,818.5 L536.4,811 L546.5,805.9 L546.5,798.4 L536.4,794.6 L541.4,790.8 L526.3,788.3 Z" fill="#4A80C0" stroke="#fff" stroke-width="0.9" stroke-linejoin="round"/>
<path d="M621.6,783.3 L643,780.8 L660.7,774.5 L678.3,777 L685.9,783.3 L675.8,795.9 L665.7,811 L643,817.3 L630.5,818.5 L614.1,803.4 L615.3,790.8 Z" fill="#5C77A0" stroke="#fff" stroke-width="0.9" stroke-linejoin="round"/>
<path d="M536.4,794.6 L551.5,790.8 L571.7,788.3 L573.8,780.8 L585.1,773.2 L597.7,766.9 L607.8,769.4 L617.9,773.2 L621.6,783.3 L615.3,790.8 L614.1,800.9 L607.8,804.7 L592.7,808.5 L580.1,805.9 L566.6,803.4 L551.5,803.4 L541.4,800.9 Z" fill="#E83A00" stroke="#fff" stroke-width="0.9" stroke-linejoin="round"/>
<ellipse cx="530.6" cy="878.5" rx="4.4" ry="8.2" fill="#5C77A0"/>
<ellipse cx="529.5" cy="906" rx="8" ry="15.5" fill="#5C77A0"/>
<rect x="226" y="697" width="130" height="236" fill="#FBFBFB" fill-opacity="0.93"/>
<rect x="241" y="713" width="32" height="15" fill="#E83A00"/>
<text x="288.5" y="724.5" font-size="11" fill="#505050">€ 2,24Mio.</text>
<rect x="241" y="737" width="32" height="15" fill="#D94515"/>
<text x="288.5" y="748.5" font-size="11" fill="#505050">€ 2Mio.</text>
<rect x="241" y="761" width="32" height="15" fill="#CA502B"/>
<text x="288.5" y="772.5" font-size="11" fill="#505050">€ 1,75Mio.</text>
<rect x="241" y="785" width="32" height="15" fill="#BA5A41"/>
<text x="288.5" y="796.5" font-size="11" fill="#505050">€ 1,51Mio.</text>
<rect x="241" y="809" width="32" height="15" fill="#AB6257"/>
<text x="288.5" y="820.5" font-size="11" fill="#505050">€ 1,26Mio.</text>
<rect x="241" y="833" width="32" height="15" fill="#9A6468"/>
<text x="288.5" y="844.5" font-size="11" fill="#505050">€ 1,02Mio.</text>
<rect x="241" y="857" width="32" height="15" fill="#83687A"/>
<text x="288.5" y="868.5" font-size="11" fill="#505050">€ 776Tsd.</text>
<rect x="241" y="881" width="32" height="15" fill="#6E6E8E"/>
<text x="288.5" y="892.5" font-size="11" fill="#505050">€ 532Tsd.</text>
<rect x="241" y="905" width="32" height="15" fill="#5A77A8"/>
<text x="288.5" y="916.5" font-size="11" fill="#505050">€ 288Tsd.</text>
<rect x="241" y="929" width="32" height="15" fill="#4A80C0"/>
<text x="288.5" y="940.5" font-size="11" fill="#505050">€ 40,57Tsd.</text>
</g>
<rect x="208.5" y="680.5" width="602" height="253" fill="none" stroke="#D5D5D5"/>
<!-- MAPS END -->
</svg>
</body></html>
